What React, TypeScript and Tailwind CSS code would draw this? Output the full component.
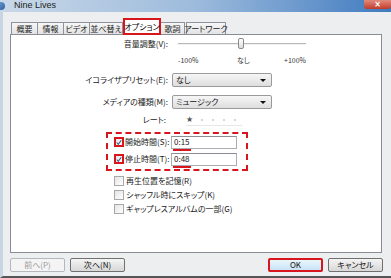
import React from "react";

const jp = "[font-family:'Meiryo','Noto_Sans_CJK_JP',sans-serif] [font-feature-settings:'palt'] whitespace-nowrap";

function Tab({ label, w, selected }: { label: string; w: number; selected?: boolean }) {
  if (selected) {
    return (
      <div
        className="h-[17px] border-2 border-[#d8141c] bg-white flex items-center justify-center text-[8px] text-black z-10 -mb-px"
        style={{ width: w }}
      >
        {label}
      </div>
    );
  }
  return (
    <div
      className="h-[12px] border border-b-0 border-[#8e929c] bg-gradient-to-b from-[#f6f6f6] to-[#e3e3e3] flex items-center justify-center text-[8px] text-[#222] -ml-px"
      style={{ width: w }}
    >
      {label}
    </div>
  );
}

function Select({ value }: { value: string }) {
  return (
    <div className="w-[100px] h-[14px] border border-[#9a9a9a] rounded-[2px] bg-gradient-to-b from-[#f6f6f6] to-[#dedede] flex items-center pl-[3px] pr-[5px] text-[8px] text-[#111]">
      <span className="flex-1">{value}</span>
      <span className="w-0 h-0 border-l-[3px] border-r-[3px] border-t-[3px] border-l-transparent border-r-transparent border-t-[#111]" />
    </div>
  );
}

function Check({ checked, red }: { checked?: boolean; red?: boolean }) {
  return (
    <div
      className={
        "w-[10px] h-[10px] shrink-0 bg-gradient-to-br from-[#e4e4e4] to-[#ffffff] flex items-center justify-center " +
        (red ? "border-2 border-[#d8141c]" : "border border-[#a8a8a8]")
      }
    >
      {checked && (
        <svg width="7" height="7" viewBox="0 0 8 8">
          <path d="M1 4 L3 6.5 L7 1" fill="none" stroke="#3a5a8a" strokeWidth="1.4" />
        </svg>
      )}
    </div>
  );
}

function Button({ label, disabled, ok }: { label: string; disabled?: boolean; ok?: boolean }) {
  return (
    <div
      className={
        "w-[55px] h-[14px] rounded-[2px] flex items-center justify-center text-[8px] " +
        (ok
          ? "border-2 border-[#d8141c] bg-gradient-to-b from-[#eaf5fd] to-[#c9e3f5] text-[#111]"
          : disabled
          ? "border border-[#b4b8bc] bg-[#f4f4f4] text-[#9a9a9a]"
          : "border border-[#707070] bg-gradient-to-b from-[#f4f4f4] to-[#d8d8d8] text-[#111]")
      }
    >
      {label}
    </div>
  );
}

export default function App() {
  return (
    <div className={"w-[391px] h-[278px] overflow-hidden bg-[#eceef0] flex flex-col " + jp}>
      {/* title bar */}
      <div className="h-[12px] flex items-center bg-gradient-to-r from-[#c9d8e8] via-[#9dbbdc] to-[#3f7bbf] relative">
        <div className="w-[8px] h-[8px] rounded-full bg-gradient-to-br from-[#6fa3d8] to-[#2d5f9a] -ml-[3px]" />
        <span className="ml-[9px] text-[9px] text-[#222] [font-family:'Liberation_Sans',sans-serif]">Nine Lives</span>
        <div className="flex-1" />
        <div className="self-start w-[27px] h-[9px] rounded-b-[3px] bg-gradient-to-b from-[#e08a7c] to-[#c0392b] flex items-center justify-center text-white text-[8px] leading-none [font-family:'DejaVu_Sans',sans-serif] font-bold">
          ×
        </div>
      </div>

      <div className="flex-1 flex flex-col border-l-[3px] border-[#c8d5e2] border-b-[2px] border-b-[#555]">
        {/* tabs */}
        <div className="mt-[5px] ml-[9px] h-[17px] flex items-end">
          <Tab label="概要" w={27} />
          <Tab label="情報" w={27} />
          <Tab label="ビデオ" w={27} />
          <Tab label="並べ替え" w={34} />
          <Tab label="オプション" w={38} selected />
          <Tab label="歌詞" w={25} />
          <div className="w-[2px]" />
          <Tab label="アートワーク" w={40} />
        </div>

        {/* panel */}
        <div className="ml-[7px] w-[372px] h-[219px] border border-[#898c95] bg-white flex flex-col text-[8px] text-[#1a1a1a]">
          {/* volume */}
          <div className="mt-[3px] h-[11px] flex items-center">
            <div className="w-[157px] text-right">音量調整(V):</div>
            <div className="ml-[10px] w-[128px] h-[11px] relative flex items-center">
              <div className="w-full h-[2px] border-t border-[#b8b8b8] border-b border-b-[#f0f0f0]" />
              <div className="absolute left-[60px] top-0 w-[6px] h-[11px] rounded-[2px] border border-[#8a8a8a] bg-gradient-to-b from-[#ffffff] to-[#dcdcdc]" />
            </div>
          </div>
          <div className="mt-[6px] h-[10px] flex items-center text-[7px] text-[#333]">
            <div className="w-[167px]" />
            <div className="w-[128px] relative h-[10px] flex items-center">
              <span className="absolute left-0">-100%</span>
              <span className="absolute left-[59px]">なし</span>
              <span className="absolute left-[106px]">+100%</span>
            </div>
          </div>

          {/* eq */}
          <div className="mt-[8px] h-[14px] flex items-center">
            <div className="w-[157px] text-right">イコライザプリセット(E):</div>
            <div className="ml-[4px]">
              <Select value="なし" />
            </div>
          </div>
          <div className="mt-[8px] h-[14px] flex items-center">
            <div className="w-[157px] text-right">メディアの種類(M):</div>
            <div className="ml-[4px]">
              <Select value="ミュージック" />
            </div>
          </div>
          <div className="mt-[5px] h-[12px] flex items-center">
            <div className="w-[155px] text-right">レート:</div>
            <div className="ml-[20px] flex items-center border-b border-[#e6e6e6] pr-[6px] h-[11px]">
              <span className="text-[8px] text-[#555] [font-family:'DejaVu_Sans',sans-serif]">★</span>
              <span className="w-[2px] h-[2px] rounded-full bg-[#c8c8c8] ml-[8px]" />
              <span className="w-[2px] h-[2px] rounded-full bg-[#c8c8c8] ml-[9px]" />
              <span className="w-[2px] h-[2px] rounded-full bg-[#c8c8c8] ml-[9px]" />
              <span className="w-[2px] h-[2px] rounded-full bg-[#c8c8c8] ml-[9px]" />
            </div>
          </div>

          {/* dashed box */}
          <div className="mt-[6px] ml-[95px] w-[142px] h-[39px] border-2 border-dashed border-[#d8141c] flex flex-col pl-[6px] pr-[9px] pt-[1px]">
            <div className="h-[14px] flex items-center">
              <Check checked red />
              <span className="ml-[1px]">開始時間(S):</span>
              <div className="ml-auto w-[66px] h-[13px] border border-[#abadb3] border-t-[#8a8d95] flex items-center pl-[2px] relative">
                0:15
                <div className="absolute left-[1px] -bottom-[3px] w-[18px] h-[2px] bg-[#d8141c]" />
              </div>
            </div>
            <div className="mt-[3px] h-[14px] flex items-center">
              <Check checked red />
              <span className="ml-[1px]">停止時間(T):</span>
              <div className="ml-auto w-[66px] h-[13px] border border-[#abadb3] border-t-[#8a8d95] flex items-center pl-[2px] relative">
                0:48
                <div className="absolute left-[1px] -bottom-[3px] w-[18px] h-[2px] bg-[#d8141c]" />
              </div>
            </div>
          </div>

          <div className="mt-[4px] ml-[103px] flex flex-col gap-[3px]">
            <div className="h-[11px] flex items-center gap-[2px]">
              <Check />
              <span>再生位置を記憶(R)</span>
            </div>
            <div className="h-[11px] flex items-center gap-[2px]">
              <Check />
              <span>シャッフル時にスキップ(K)</span>
            </div>
            <div className="h-[11px] flex items-center gap-[2px]">
              <Check />
              <span>ギャップレスアルバムの一部(G)</span>
            </div>
          </div>
        </div>

        {/* buttons */}
        <div className="mt-[5px] ml-[7px] w-[373px] flex items-center">
          <Button label="前へ(P)" disabled />
          <div className="w-[5px]" />
          <Button label="次へ(N)" />
          <div className="flex-1" />
          <Button label="OK" ok />
          <div className="w-[5px]" />
          <Button label="キャンセル" />
        </div>
      </div>
    </div>
  );
}
